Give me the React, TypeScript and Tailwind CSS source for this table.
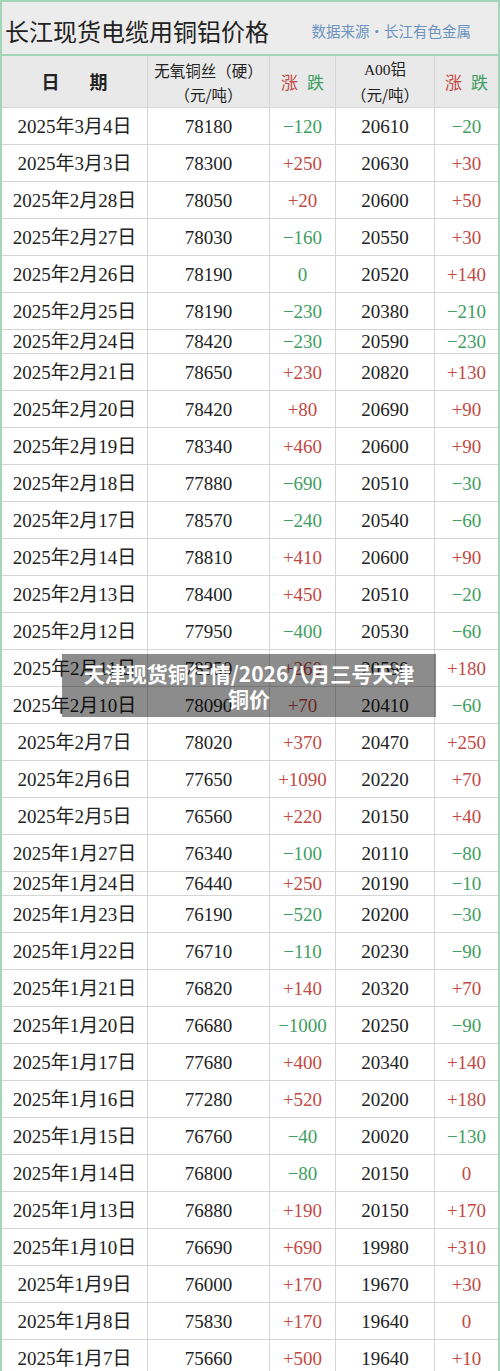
import React from "react";

type Row = {
  d: string;
  cu: string;
  dc: string;
  al: string;
  da: string;
  short?: boolean;
};

// "+0" = red zero, "-0" = green zero
const rows: Row[] = [
  { d: "2025年3月4日", cu: "78180", dc: "-120", al: "20610", da: "-20" },
  { d: "2025年3月3日", cu: "78300", dc: "+250", al: "20630", da: "+30" },
  { d: "2025年2月28日", cu: "78050", dc: "+20", al: "20600", da: "+50" },
  { d: "2025年2月27日", cu: "78030", dc: "-160", al: "20550", da: "+30" },
  { d: "2025年2月26日", cu: "78190", dc: "-0", al: "20520", da: "+140" },
  { d: "2025年2月25日", cu: "78190", dc: "-230", al: "20380", da: "-210" },
  { d: "2025年2月24日", cu: "78420", dc: "-230", al: "20590", da: "-230", short: true },
  { d: "2025年2月21日", cu: "78650", dc: "+230", al: "20820", da: "+130" },
  { d: "2025年2月20日", cu: "78420", dc: "+80", al: "20690", da: "+90" },
  { d: "2025年2月19日", cu: "78340", dc: "+460", al: "20600", da: "+90" },
  { d: "2025年2月18日", cu: "77880", dc: "-690", al: "20510", da: "-30" },
  { d: "2025年2月17日", cu: "78570", dc: "-240", al: "20540", da: "-60" },
  { d: "2025年2月14日", cu: "78810", dc: "+410", al: "20600", da: "+90" },
  { d: "2025年2月13日", cu: "78400", dc: "+450", al: "20510", da: "-20" },
  { d: "2025年2月12日", cu: "77950", dc: "-400", al: "20530", da: "-60" },
  { d: "2025年2月11日", cu: "78350", dc: "+260", al: "20590", da: "+180" },
  { d: "2025年2月10日", cu: "78090", dc: "+70", al: "20410", da: "-60" },
  { d: "2025年2月7日", cu: "78020", dc: "+370", al: "20470", da: "+250" },
  { d: "2025年2月6日", cu: "77650", dc: "+1090", al: "20220", da: "+70" },
  { d: "2025年2月5日", cu: "76560", dc: "+220", al: "20150", da: "+40" },
  { d: "2025年1月27日", cu: "76340", dc: "-100", al: "20110", da: "-80" },
  { d: "2025年1月24日", cu: "76440", dc: "+250", al: "20190", da: "-10", short: true },
  { d: "2025年1月23日", cu: "76190", dc: "-520", al: "20200", da: "-30" },
  { d: "2025年1月22日", cu: "76710", dc: "-110", al: "20230", da: "-90" },
  { d: "2025年1月21日", cu: "76820", dc: "+140", al: "20320", da: "+70" },
  { d: "2025年1月20日", cu: "76680", dc: "-1000", al: "20250", da: "-90" },
  { d: "2025年1月17日", cu: "77680", dc: "+400", al: "20340", da: "+140" },
  { d: "2025年1月16日", cu: "77280", dc: "+520", al: "20200", da: "+180" },
  { d: "2025年1月15日", cu: "76760", dc: "-40", al: "20020", da: "-130" },
  { d: "2025年1月14日", cu: "76800", dc: "-80", al: "20150", da: "+0" },
  { d: "2025年1月13日", cu: "76880", dc: "+190", al: "20150", da: "+170" },
  { d: "2025年1月10日", cu: "76690", dc: "+690", al: "19980", da: "+310" },
  { d: "2025年1月9日", cu: "76000", dc: "+170", al: "19670", da: "+30" },
  { d: "2025年1月8日", cu: "75830", dc: "+170", al: "19640", da: "+0" },
  { d: "2025年1月7日", cu: "75660", dc: "+500", al: "19640", da: "+10" },
];

function Change({ v }: { v: string }) {
  const up = v.startsWith("+");
  const text = v === "+0" || v === "-0" ? "0" : v.replace("-", "−");
  return <span className={up ? "text-[#c24a45]" : "text-[#3f9e63]"}>{text}</span>;
}

const grid = "grid grid-cols-[146px_122px_66px_99px_1fr]";
const cell = "flex items-center justify-center border-r border-[#d5d5d5]";

function UpDown() {
  return (
    <div className="flex items-center justify-center gap-[9px] text-[17px]">
      <span className="text-[#c24a45]">涨</span>
      <span className="text-[#3f9e63]">跌</span>
    </div>
  );
}

export default function App() {
  return (
    <div
      className="relative w-[500px] h-[1371px] overflow-hidden bg-white text-[#222]"
      style={{ fontFamily: '"Liberation Serif", "Noto Sans CJK SC", serif' }}
    >
      <div className="border-x-2 border-[#a3d6b6]">
        {/* title */}
        <div className="flex h-[56px] items-center justify-between border-y-2 border-[#a3d6b6] bg-[#ececec] pl-[3px] pr-[27px] pt-[6px]">
          <div className="text-[24px] leading-none" style={{ fontFamily: '"Noto Sans CJK SC", sans-serif' }}>
            长江现货电缆用铜铝价格
          </div>
          <div className="text-[14.5px] text-[#6b93c0]" style={{ fontFamily: '"Noto Sans CJK SC", sans-serif' }}>
            数据来源・长江有色金属
          </div>
        </div>

        {/* header */}
        <div className={`${grid} h-[52px] border-b border-[#d5d5d5] bg-[#e9e9e9]`}>
          <div className={`${cell} gap-[30px] text-[18px] font-bold`} style={{ fontFamily: '"Noto Sans CJK SC", sans-serif' }}>
            <span>日</span>
            <span>期</span>
          </div>
          <div className={`${cell} flex-col text-[15.5px] leading-[24px]`} style={{ fontFamily: '"Noto Sans CJK SC", sans-serif' }}>
            <span>无氧铜丝（硬）</span>
            <span>（元/吨）</span>
          </div>
          <div className={cell} style={{ fontFamily: '"Noto Sans CJK SC", sans-serif' }}>
            <UpDown />
          </div>
          <div className={`${cell} flex-col text-[15.5px] leading-[24px]`} style={{ fontFamily: '"Noto Sans CJK SC", sans-serif' }}>
            <span style={{ fontFamily: '"Liberation Serif", "Noto Sans CJK SC", serif' }}>A00铝</span>
            <span>（元/吨）</span>
          </div>
          <div className="flex items-center justify-center" style={{ fontFamily: '"Noto Sans CJK SC", sans-serif' }}>
            <UpDown />
          </div>
        </div>

        {/* body */}
        {rows.map((r) => (
          <div
            key={r.d}
            className={`${grid} ${r.short ? "h-[24px]" : "h-[37px]"} border-b border-[#d5d5d5] text-[19px] leading-none`}
          >
            <div className={cell}>{r.d}</div>
            <div className={cell}>{r.cu}</div>
            <div className={cell}>
              <Change v={r.dc} />
            </div>
            <div className={cell}>{r.al}</div>
            <div className="flex items-center justify-center">
              <Change v={r.da} />
            </div>
          </div>
        ))}
      </div>

      {/* caption overlay */}
      <div
        className="absolute left-[62px] top-[654px] flex h-[63px] w-[374px] flex-col items-center justify-center bg-black/45 text-[21px] font-bold leading-[25px] text-white"
        style={{ fontFamily: '"Noto Sans CJK SC", sans-serif' }}
      >
        <span>天津现货铜行情/2026八月三号天津</span>
        <span>铜价</span>
      </div>
    </div>
  );
}
